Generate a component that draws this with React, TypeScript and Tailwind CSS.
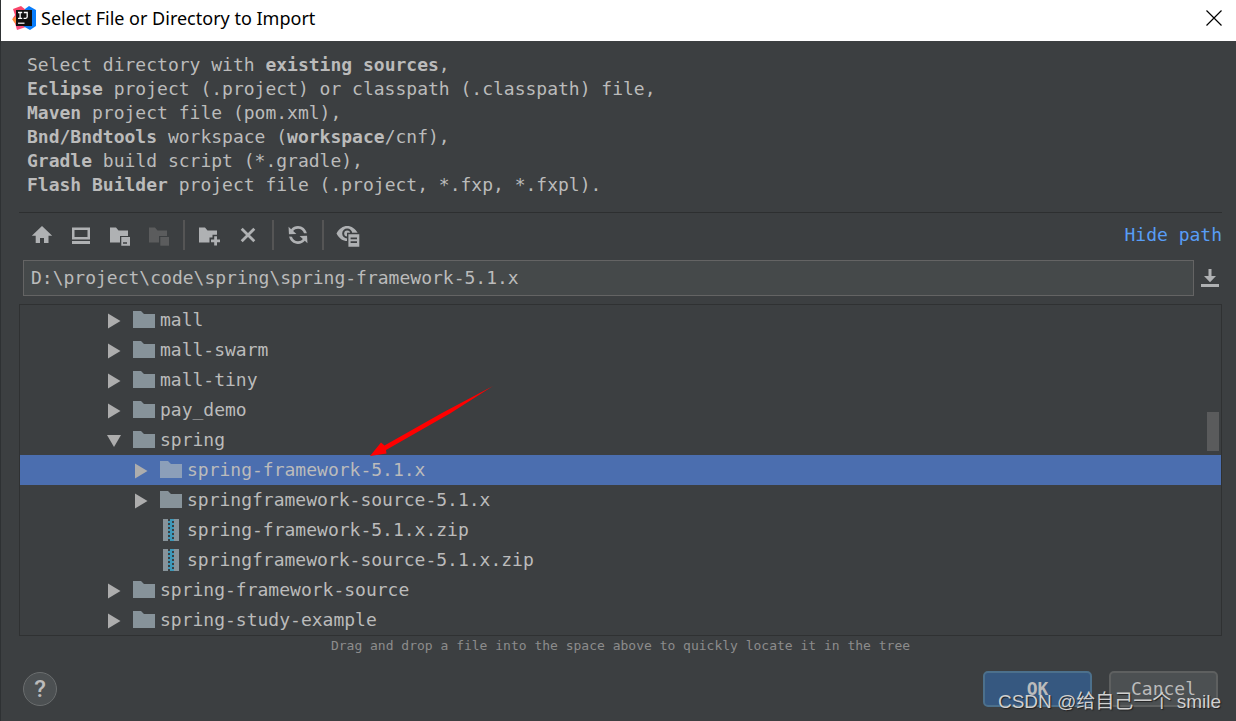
import type { ReactNode } from "react";
import clsx from "clsx";

type Line = { text: string; bold?: boolean }[];

const description: Line[] = [
  [{ text: "Select directory with " }, { text: "existing sources", bold: true }, { text: "," }],
  [{ text: "Eclipse", bold: true }, { text: " project (.project) or classpath (.classpath) file," }],
  [{ text: "Maven", bold: true }, { text: " project file (pom.xml)," }],
  [
    { text: "Bnd/Bndtools", bold: true },
    { text: " workspace (" },
    { text: "workspace", bold: true },
    { text: "/cnf)," },
  ],
  [{ text: "Gradle", bold: true }, { text: " build script (*.gradle)," }],
  [{ text: "Flash Builder", bold: true }, { text: " project file (.project, *.fxp, *.fxpl)." }],
];

type Node = {
  name: string;
  kind: "folder" | "zip";
  nested?: boolean;
  open?: boolean;
  selected?: boolean;
};

const nodes: Node[] = [
  { name: "mall", kind: "folder" },
  { name: "mall-swarm", kind: "folder" },
  { name: "mall-tiny", kind: "folder" },
  { name: "pay_demo", kind: "folder" },
  { name: "spring", kind: "folder", open: true },
  { name: "spring-framework-5.1.x", kind: "folder", nested: true, selected: true },
  { name: "springframework-source-5.1.x", kind: "folder", nested: true },
  { name: "spring-framework-5.1.x.zip", kind: "zip", nested: true },
  { name: "springframework-source-5.1.x.zip", kind: "zip", nested: true },
  { name: "spring-framework-source", kind: "folder" },
  { name: "spring-study-example", kind: "folder" },
];

function Logo() {
  return (
    <svg width="24" height="24" viewBox="0 0 24 24" aria-hidden="true">
      <path d="M1 3 L9 0 L14 4 L12 12 L3 17 L1 12 L3 9 Z" fill="#f9456a" />
      <path d="M0 13 L6 9 L9 18 L4 19 Z" fill="#fd8b3c" />
      <path d="M3 17 L11 19 L14 21 L5 24 Z" fill="#fb4f80" />
      <path d="M13 3 L17 0 L24 4 L24 20 L18 24 L11 20 Z" fill="#087cfa" />
      <rect x="4" y="4" width="16" height="16" fill="#101010" />
      <path d="M6 6.5h4.2M8.100 6.5v5.8M6 12.300h4.200M11.800 6.500h3.400v4.300q0 1.500-1.600 1.500h-2" fill="none" stroke="#fff" strokeWidth="1.3" />
      <path d="M6 17.2h6.5" stroke="#fff" strokeWidth="1.2" />
    </svg>
  );
}

const folderShape = "M2 4.5H8L10.5 7.5H20V19.5H2Z";

function HomeIcon() {
  return <path d="M12 3 22.2 12.7H18.5V20H14V15H10V20H5.7V12.7H1.8Z" />;
}

function DesktopIcon() {
  return (
    <>
      <path fillRule="evenodd" d="M3 4.5H21V16.5H3ZM5.5 7V14H18.5V7Z" />
      <path d="M3 18H21V21H3Z" />
    </>
  );
}

function ProjectIcon() {
  return (
    <>
      <path d={folderShape} />
      <path d="M12 13H23V24H12Z" fill="#3c3f41" />
      <path fillRule="evenodd" d="M13.3 14H22V22.7H13.3ZM15 19.2V20.8H19V19.2Z" />
    </>
  );
}

function ModuleIcon() {
  return (
    <>
      <path d={folderShape} />
      <path d="M12 13H23V24H12Z" fill="#3c3f41" />
      <path d="M13.3 14H22V22.7H13.3Z" />
    </>
  );
}

function NewFolderIcon() {
  return (
    <>
      <path d={folderShape} />
      <path d="M12.5 14.5H15.5V11.8H21V14.5H24V21H21V24H15.5V21H12.5Z" fill="#3c3f41" />
      <path d="M17.2 13.3H20V16.5H23V19.3H20V22.4H17.2V19.3H14V16.5H17.2Z" />
    </>
  );
}

function DeleteIcon() {
  return <path d="M5.7 5.7 18.3 18.3M18.3 5.7 5.7 18.3" stroke="currentColor" strokeWidth="2.8" />;
}

function RefreshIcon() {
  return (
    <path
      transform="scale(1.5)"
      d="M12.57 11.89C11.47 13.18 9.83 14 8 14 5.04 14 2.58 11.86 2.09 9.04L3.95 9.11C4.43 10.89 6.06 12.2 8 12.2 9.3 12.2 10.46 11.61 11.23 10.68L9.05 8.71 14.04 8.45 14.3 13.44ZM3.43 4.12C4.53 2.82 6.17 2 8 2 10.92 2 13.35 4.09 13.89 6.85L12.02 6.79C11.5 5.06 9.9 3.8 8 3.8 6.7 3.8 5.54 4.39 4.77 5.32L6.95 7.29 1.96 7.55 1.7 2.56Z"
    />
  );
}

function ShowHiddenIcon() {
  return (
    <>
      <path
        fillRule="evenodd"
        d="M.5 10.5C3 5.5 7 3 11.2 3S19.5 5.5 22 10.5C19.5 15.5 15.5 18 11.2 18S3 15.5.5 10.5ZM11.2 5.5A5 5 0 1 0 11.2 15.5 5 5 0 1 0 11.2 5.5Z"
      />
      <circle cx="11.2" cy="10.5" r="3" />
      <path d="M11 9.7H24V24H11Z" fill="#3c3f41" />
      <path fillRule="evenodd" d="M12.4 11.2H23.3V23.8H12.4ZM14.6 14.6V16.2H21V14.6ZM14.6 18.3V19.9H21V18.3Z" />
    </>
  );
}

function ToolButton({ label, disabled, children }: { label: string; disabled?: boolean; children: ReactNode }) {
  return (
    <button
      aria-label={label}
      disabled={disabled}
      className={clsx("flex h-[30px] w-[39px] items-center justify-center", disabled ? "text-[#5b5c5d]" : "text-[#afb1b3]")}
    >
      <svg width="24" height="24" viewBox="0 0 24 24" fill="currentColor">
        {children}
      </svg>
    </button>
  );
}

function Divider() {
  return (
    <div className="flex h-[30px] w-[11px] justify-center">
      <div className="w-[2px] bg-[#555555]" />
    </div>
  );
}

function FolderIcon({ selected }: { selected?: boolean }) {
  return (
    <svg width="22" height="18" viewBox="0 0 22 18" aria-hidden="true">
      <path d="M0 0H8L11 3H22V17H0Z" fill={selected ? "#8c9fb9" : "#87939a"} />
    </svg>
  );
}

function ZipIcon() {
  return (
    <svg width="22" height="22" viewBox="0 0 22 22" aria-hidden="true">
      <path d="M3 0H8V22H3ZM14 0H19V22H14Z" fill="#87939a" />
      <path
        d="M10 1h4M8 3h4M10 5h4M8 7h4M10 9h4M8 11h4M10 13h4M8 15h4M10 17h4M8 19h4M10 21h4"
        stroke="#40b6e0"
        strokeWidth="1.6"
      />
    </svg>
  );
}

function Toggle({ open }: { open?: boolean }) {
  return (
    <svg width="14" height="16" viewBox="0 0 14 16" className="mt-[2px]" fill="#adadad" aria-hidden="true">
      <path d={open ? "M0 2H14L7 14Z" : "M1 .5V15.5L13.5 8Z"} />
    </svg>
  );
}

function TreeRow({ node }: { node: Node }) {
  return (
    <li
      role="treeitem"
      aria-selected={!!node.selected}
      className={clsx(
        "flex h-[30px] items-center",
        node.nested ? "pl-[114px]" : "pl-[87px]",
        node.selected && "bg-[#4b6eaf]"
      )}
    >
      <span className="w-[26px] shrink-0">{node.kind === "folder" && <Toggle open={node.open} />}</span>
      {node.kind === "folder" ? <FolderIcon selected={node.selected} /> : <ZipIcon />}
      <span className="ml-[5px] whitespace-nowrap">{node.name}</span>
    </li>
  );
}

export default function App() {
  return (
    <div className="relative flex min-h-screen flex-col overflow-hidden border-l border-[#2e3133] bg-[#3c3f41] font-['DejaVu_Sans_Mono',monospace] text-lg leading-6 text-[#bbbbbb]">
      <header className="flex h-[41px] items-center bg-white pb-[5px] pl-[11px] pr-[13px] text-black">
        <Logo />
        <h1 className="ml-[5px] flex-1 font-['Noto_Sans',sans-serif] text-lg">Select File or Directory to Import</h1>
        <button aria-label="Close" className="flex size-[18px] items-center justify-center">
          <svg width="16" height="16" viewBox="0 0 16 16" stroke="#000" strokeWidth="1.2">
            <path d="M.5 .5 15.5 15.5M15.5 .5 .5 15.5" />
          </svg>
        </button>
      </header>

      <main className="flex flex-1 flex-col pl-[18px] pr-[14px]">
        <div className="border-b border-[#2d2f30] pb-[15px] pl-2 pt-3">
          {description.map((line, i) => (
            <p key={i} className="whitespace-pre">
              {line.map((part, j) =>
                part.bold ? <b key={j}>{part.text}</b> : <span key={j}>{part.text}</span>
              )}
            </p>
          ))}
        </div>

        <div className="flex items-center pl-[3px] pt-[7px]">
          <ToolButton label="Home"><HomeIcon /></ToolButton>
          <ToolButton label="Desktop"><DesktopIcon /></ToolButton>
          <ToolButton label="Project directory"><ProjectIcon /></ToolButton>
          <ToolButton label="Module directory" disabled><ModuleIcon /></ToolButton>
          <Divider />
          <ToolButton label="New folder"><NewFolderIcon /></ToolButton>
          <ToolButton label="Delete"><DeleteIcon /></ToolButton>
          <Divider />
          <ToolButton label="Refresh"><RefreshIcon /></ToolButton>
          <Divider />
          <ToolButton label="Show hidden files"><ShowHiddenIcon /></ToolButton>
          <a href="#path" className="ml-auto text-[#589df6]">Hide path</a>
        </div>

        <div id="path" className="flex items-center pl-1 pt-[10px]">
          <input
            aria-label="Path"
            defaultValue="D:\project\code\spring\spring-framework-5.1.x"
            className="h-9 min-w-0 flex-1 border border-[#646464] bg-[#45494a] px-[7px] pb-[2px] outline-none"
          />
          <button aria-label="History" className="ml-[7px] mr-[3px] text-[#afb1b3]">
            <svg width="18" height="18" viewBox="0 0 18 18" fill="currentColor">
              <path d="M7.5 0H10.5V7H15L9 13.3 3 7H7.5ZM0 15H18V18H0Z" />
            </svg>
          </button>
        </div>

        <div className="relative mt-2 border border-[#2f3132]">
          <ul role="tree" aria-label="Directories">
            {nodes.map((node) => (
              <TreeRow key={node.name} node={node} />
            ))}
          </ul>
          <div className="absolute right-[2px] top-[107px] h-[39px] w-[12px] bg-[#5a5b5c]" />
          {/* pointer to the selected directory */}
          <svg className="absolute left-[350px] top-[80px]" width="124" height="72" viewBox="0 0 124 72" aria-hidden="true">
            <path d="M0 71 11 57.5 14.5 60.5 72 28 123 1 80 28.5 16 65 16.5 68.5Z" fill="#f00" />
          </svg>
        </div>

        <p className="text-center text-[13px] leading-5 text-[#8c8c8c]">
          Drag and drop a file into the space above to quickly locate it in the tree
        </p>

        <footer className="mb-[14px] mt-auto flex items-center pl-1 pr-1">
          <button
            aria-label="Help"
            className="size-[34px] rounded-full border border-[#6a6d6e] bg-[#4c5052] font-['Roboto',sans-serif] text-2xl font-medium"
          >
            ?
          </button>
          <button className="ml-auto h-9 w-[109px] rounded-[5px] border-2 border-[#4c708c] bg-[#365880] font-bold">OK</button>
          <button className="ml-[17px] h-9 w-[109px] rounded-[5px] border-2 border-[#5e6060] bg-[#4c5052]">Cancel</button>
        </footer>
      </main>

      <p className="pointer-events-none absolute bottom-[7px] right-[15px] whitespace-nowrap font-['Liberation_Sans','Noto_Sans_CJK_SC',sans-serif] text-[19px] leading-6 text-[#d0d0d0] [text-shadow:1px_1px_1px_#222]">
        CSDN @给自己一个 smile
      </p>
    </div>
  );
}
